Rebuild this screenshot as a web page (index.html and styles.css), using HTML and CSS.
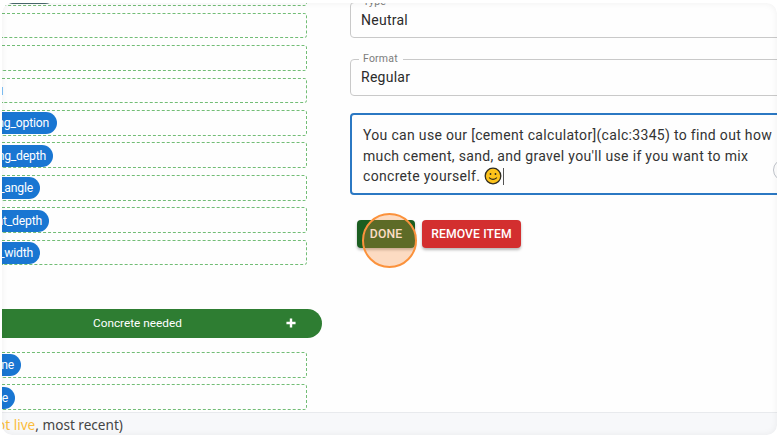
FILE: index.html
```html
<!DOCTYPE html>
<html lang="en">
<head>
<meta charset="utf-8">
<title>Calculator editor</title>
<link rel="stylesheet" href="styles.css">
</head>
<body>
<div class="frame">
  <main class="content">
    <section class="variables">
      <div class="list">
        <div class="slot"><span class="chip chip-top"></span></div>
        <div class="slot"></div>
        <div class="slot"></div>
        <div class="slot"><span class="chip chip-sliver"></span></div>
        <div class="slot"><span class="chip chip-option">ng_option</span></div>
        <div class="slot"><span class="chip chip-depth">ng_depth</span></div>
        <div class="slot"><span class="chip chip-angle">_angle</span></div>
        <div class="slot"><span class="chip chip-tdepth">nt_depth</span></div>
        <div class="slot"><span class="chip chip-angle">_width</span></div>
      </div>
      <div class="group"><span class="group-name">Concrete needed</span>
        <svg class="plus" viewBox="0 0 10 10"><path d="M5 1.2v7.6M1.2 5h7.6" stroke="#fff" stroke-width="2"/></svg>
      </div>
      <div class="list list-second">
        <div class="slot"><span class="chip chip-me">ne</span></div>
        <div class="slot"><span class="chip chip-e">e</span></div>
      </div>
    </section>
    <section class="form">
      <fieldset class="field field-type"><legend>Type</legend><span>Neutral</span></fieldset>
      <fieldset class="field field-format"><legend>Format</legend><span>Regular</span></fieldset>
      <div class="editor">
        <div>You can use our [cement calculator](calc:3345) to find out how</div>
        <div>much cement, sand, and gravel you'll use if you want to mix</div>
        <div class="last-line"><span>concrete yourself.</span><svg class="smile" viewBox="0 0 18 18"><circle cx="9" cy="9" r="7.8" fill="#fcc21b" stroke="#2f2b20" stroke-width="1.3"/><ellipse cx="6.5" cy="7" rx=".9" ry="1.1" fill="#2f2b20"/><ellipse cx="11.5" cy="7" rx=".9" ry="1.1" fill="#2f2b20"/><path d="M5.4 10.8Q9 14 12.6 10.8" fill="none" stroke="#2f2b20" stroke-width="1.1" stroke-linecap="round"/></svg><i class="caret"></i></div>
        <i class="handle"></i>
      </div>
      <div class="actions">
        <button class="button done">DONE<i class="click-ring"></i></button>
        <button class="button remove">REMOVE ITEM</button>
      </div>
    </section>
  </main>
  <footer class="status"><span class="live">ot live</span>, most recent)</footer>
</div>
</body>
</html>
```

FILE: styles.css
```css
* { box-sizing: border-box; }
body { margin: 0; background: #fff; font-family: Roboto, "Liberation Sans", sans-serif; }
.frame {
  width: 775px; height: 432px; margin: 3px 2px; overflow: hidden;
  border-radius: 10px; background: #fefefe;
  display: flex; flex-direction: column;
  position: relative;
}
.frame::after {
  content: ""; position: absolute; inset: 0; border-radius: 10px;
  box-shadow: inset 0 0 7px rgba(0, 0, 0, .06); pointer-events: none;
}
.content { height: 409px; display: flex; overflow: hidden; flex: none; }
.variables { width: 320px; flex: none; }
.list {
  width: 305px; margin-top: -22.8px;
  display: flex; flex-direction: column; gap: 6.7px;
}
.slot {
  height: 25.76px; flex: none; border: 1px dashed #72bd76; border-left: 0;
  border-radius: 0 3px 3px 0; display: flex; align-items: center;
}
.chip {
  height: 22px; margin-top: 1px; border-radius: 0 11px 11px 0; background: #1976d2; color: #fff;
  font-size: 12.2px; line-height: 22px; letter-spacing: -.2px; white-space: nowrap;
  display: flex; justify-content: flex-end; padding-right: 8px; overflow: hidden;
}
.chip-top { width: 54px; margin-top: 0; background: #49686c; border-radius: 11px; }
.chip-sliver { width: 1px; height: 8px; padding: 0; border-radius: 0; background: #7fc0f5; }
.chip-option { width: 55px; }
.chip-depth { width: 51px; padding-right: 7px; }
.chip-angle { width: 38px; padding-right: 7px; }
.chip-tdepth { width: 47px; padding-right: 7px; }
.chip-me { width: 19px; padding-right: 7px; }
.chip-e { width: 13px; padding-right: 7px; }
.group {
  height: 29px; margin-top: 43.4px; border-radius: 0 15px 15px 0;
  background: #2e7d32; color: #fff; font-size: 11.8px;
  display: flex; align-items: center; justify-content: space-between;
  padding: 0 25px 1px 91px;
}
.plus { width: 12px; height: 12px; }
.list-second { margin-top: 14px; }
.form { width: 440px; flex: none; margin-left: 28px; }
.field {
  width: 440px; margin: 0; padding: 0 10px; border: 1px solid #c9c9c9;
  border-radius: 4px; color: #2b2b2b; font-size: 14px; letter-spacing: .25px;
}
.field legend {
  padding: 0 5px 0 4px; margin-left: -2px; height: 12px; line-height: 12px;
  font-size: 10.5px; letter-spacing: .2px; color: #7c7c7c;
}
.field span { display: block; line-height: 18px; }
.field-type { height: 42px; margin-top: -7px; }
.field-type span { margin-top: 3px; }
.field-format { height: 43px; margin-top: 15px; }
.field-format span { margin-top: 3px; }
.editor {
  width: 440px; height: 82px; margin-top: 17px; border: 2px solid #2b78c3;
  border-radius: 4px; padding: 10px 11px; position: relative;
  font-size: 14px; line-height: 20.5px; letter-spacing: .32px; color: #333;
  white-space: nowrap;
}
.last-line { display: flex; align-items: center; }
.smile { width: 18px; height: 18px; margin-left: 4px; }
.caret { width: 1px; height: 17px; margin-left: 1px; background: #555; }
.handle {
  position: absolute; left: 421px; top: 44px; width: 22px; height: 22px;
  border: 1px solid #bfc3ca; border-radius: 50%;
}
.actions { display: flex; gap: 7px; margin: 25px 0 0 7px; }
.button {
  height: 28px; border: 0; border-radius: 4px; padding: 0;
  font: 500 12.2px/28px Roboto, sans-serif; letter-spacing: .1px; color: #fff;
  box-shadow: 0 2px 3px rgba(0, 0, 0, .28); white-space: nowrap;
}
.done { width: 58px; background: #1b5e20; position: relative; }
.remove { width: 99px; background: #d32f2f; }
.click-ring {
  position: absolute; left: 5px; top: -7px; width: 55px; height: 55px;
  border: 2px solid #fb923c; border-radius: 50%; background: rgba(248, 139, 56, .3);
}
.status {
  height: 23px; flex: none; border-top: 1px solid #e8eaed; background: #f7f8fa;
  font: 13.6px/23px "Noto Sans", sans-serif; color: #454545; white-space: nowrap;
  text-indent: -5px;
}
.live { color: #fbbd3c; }
```
